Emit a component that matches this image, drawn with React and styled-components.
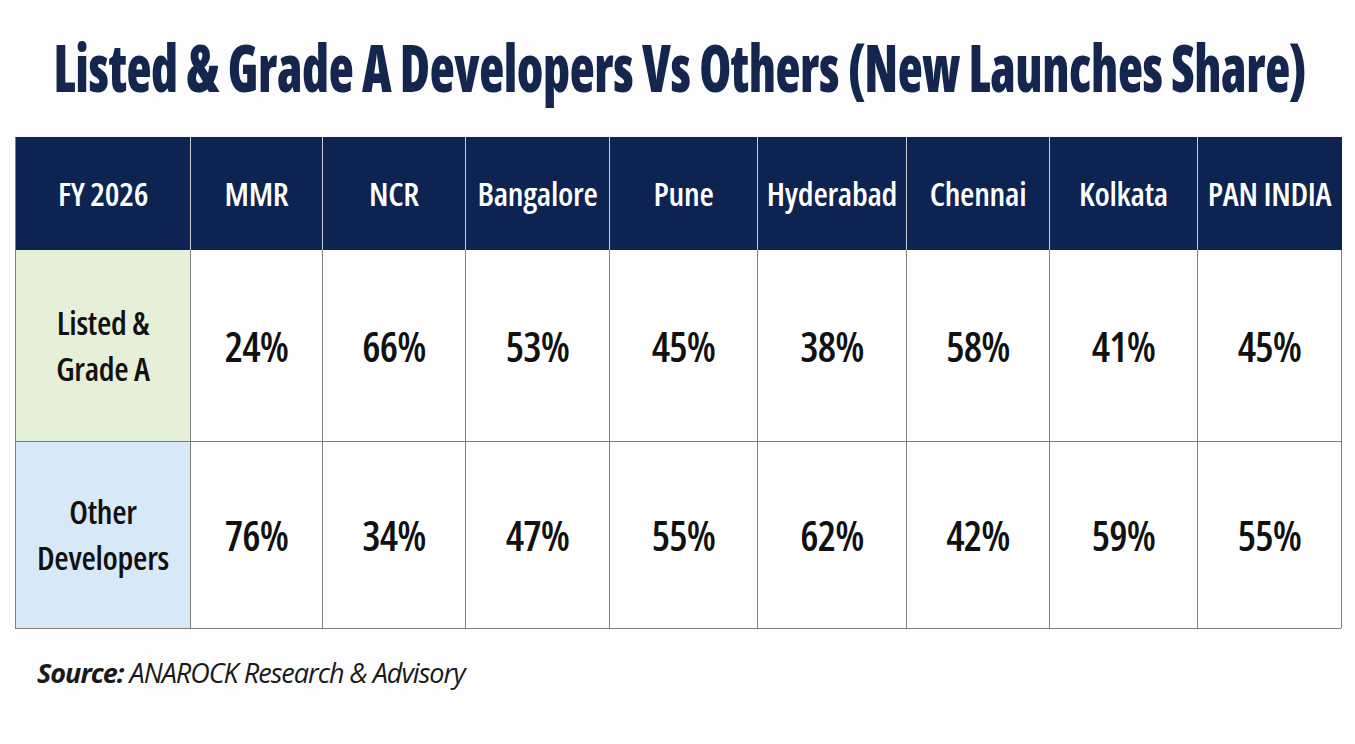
import React from "react";
import styled, { createGlobalStyle } from "styled-components";

const GlobalStyle = createGlobalStyle`
  html, body { margin: 0; padding: 0; background: #fdfdfd; }
  body { font-family: "Open Sans", "Noto Sans", sans-serif; font-stretch: condensed; }
`;

const Page = styled.div`
  width: 1355px;
  height: 744px;
  padding-top: 33px;
  box-sizing: border-box;
  display: flex;
  flex-direction: column;
`;

const TitleRow = styled.div`
  display: flex;
  justify-content: center;
  height: 66px;
  margin-bottom: 38px;
  padding-left: 5px;
`;

const Title = styled.h1`
  margin: 0 -200px;
  flex-shrink: 0;
  white-space: nowrap;
  font-family: "Open Sans", sans-serif;
  font-stretch: condensed;
  font-weight: 800;
  font-size: 66px;
  line-height: 66px;
  letter-spacing: -0.5px;
  color: #14264d;
  transform: scaleX(0.782);
  transform-origin: center;
`;

const Table = styled.div`
  margin-left: 15px;
  display: grid;
  grid-template-columns: 175px 132px 143px 144px 148px 149px 143px 148px 144px;
  grid-template-rows: 113px 191px 187px;
  width: 1326px;
  box-sizing: border-box;
  border-left: 1px solid #7d7d7d;
  border-bottom: 1px solid #7d7d7d;
`;

const HeadCell = styled.div`
  background: #0d2352;
  color: #ffffff;
  display: flex;
  align-items: center;
  justify-content: center;
  font-size: 33px;
  font-weight: 600;
  letter-spacing: -0.3px;
  border-right: ${(p) => (p.$last ? "1px solid #0d2352" : "1px solid #c9ced8")};
  box-sizing: border-box;
`;

const LabelCell = styled.div`
  background: ${(p) => p.$bg};
  display: flex;
  align-items: center;
  justify-content: center;
  text-align: center;
  font-size: 33px;
  line-height: 46px;
  font-weight: 560;
  letter-spacing: -0.3px;
  color: #111;
  border-right: 1px solid #7d7d7d;
  border-top: ${(p) => (p.$first ? "none" : "1px solid #7d7d7d")};
  box-sizing: border-box;
`;

const ValueCell = styled.div`
  background: #ffffff;
  display: flex;
  align-items: center;
  justify-content: center;
  font-size: 41px;
  font-weight: 550;
  letter-spacing: -0.8px;
  color: #111;
  border-right: 1px solid #7d7d7d;
  border-top: ${(p) => (p.$first ? "none" : "1px solid #7d7d7d")};
  box-sizing: border-box;
`;

const Source = styled.p`
  margin: 30px 0 0 37px;
  font-size: 27px;
  line-height: 28px;
  font-style: italic;
  font-weight: 400;
  font-stretch: 100%;
  color: #1a1a1a;
  letter-spacing: -1px;
`;

const SourceLabel = styled.span`
  font-weight: 700;
`;

const headers = ["FY 2026", "MMR", "NCR", "Bangalore", "Pune", "Hyderabad", "Chennai", "Kolkata", "PAN INDIA"];

const rows = [
  { label: ["Listed &", "Grade A"], bg: "#e6efd7", values: ["24%", "66%", "53%", "45%", "38%", "58%", "41%", "45%"] },
  { label: ["Other", "Developers"], bg: "#d7e8f6", values: ["76%", "34%", "47%", "55%", "62%", "42%", "59%", "55%"] },
];

export default function App() {
  return (
    <>
      <GlobalStyle />
      <Page>
        <TitleRow>
          <Title>Listed &amp; Grade A Developers Vs Others (New Launches Share)</Title>
        </TitleRow>
        <Table>
          {headers.map((h, i) => (
            <HeadCell key={h} $last={i === headers.length - 1}>
              {h}
            </HeadCell>
          ))}
          {rows.map((r, ri) => (
            <React.Fragment key={ri}>
              <LabelCell $bg={r.bg} $first={ri === 0}>
                <div>
                  {r.label[0]}
                  <br />
                  {r.label[1]}
                </div>
              </LabelCell>
              {r.values.map((v, vi) => (
                <ValueCell key={vi} $first={ri === 0}>
                  {v}
                </ValueCell>
              ))}
            </React.Fragment>
          ))}
        </Table>
        <Source>
          <SourceLabel>Source:</SourceLabel> ANAROCK Research &amp; Advisory
        </Source>
      </Page>
    </>
  );
}
